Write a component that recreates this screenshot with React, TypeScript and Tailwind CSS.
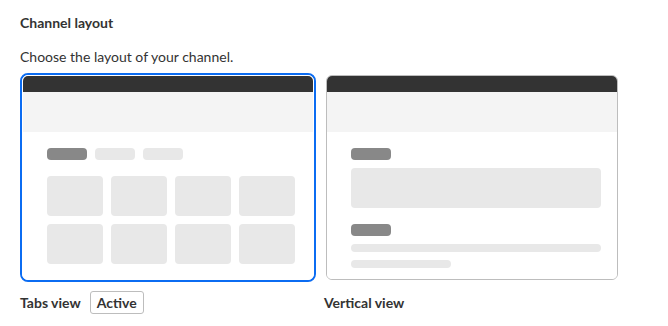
const font = { fontFamily: 'Lato, "Noto Sans", sans-serif' }

function Frame({ children }: { children: React.ReactNode }) {
  return (
    <div className="flex h-full flex-col">
      <div className="h-4 shrink-0 bg-[#333333]" />
      <div className="h-10 shrink-0 bg-[#f4f4f4]" />
      <div className="flex-1 bg-white pt-4 pl-6">
        <div className="w-[250px]">{children}</div>
      </div>
    </div>
  )
}

function TabsPreview() {
  return (
    <Frame>
      <div className="flex gap-2">
        <div className="h-3 w-10 rounded bg-[#888888]" />
        <div className="h-3 w-10 rounded bg-[#e8e8e8]" />
        <div className="h-3 w-10 rounded bg-[#e8e8e8]" />
      </div>
      <div className="mt-4 grid w-[248px] grid-cols-4 gap-2">
        {Array.from({ length: 8 }).map((_, i) => (
          <div key={i} className="h-10 rounded bg-[#e8e8e8]" />
        ))}
      </div>
    </Frame>
  )
}

function VerticalPreview() {
  return (
    <Frame>
      <div className="h-3 w-10 rounded bg-[#888888]" />
      <div className="mt-2 h-10 rounded bg-[#e8e8e8]" />
      <div className="mt-4 h-3 w-10 rounded bg-[#888888]" />
      <div className="mt-2 h-2 rounded-full bg-[#e8e8e8]" />
      <div className="mt-2 h-2 w-[100px] rounded-full bg-[#e8e8e8]" />
    </Frame>
  )
}

export default function App() {
  return (
    <div className="min-h-[326px] bg-white px-5 pt-[13px] text-[#333333]" style={font}>
      <h2 className="text-[14px] leading-5 font-bold">Channel layout</h2>
      <p className="mt-[14px] text-[14px] leading-5">Choose the layout of your channel.</p>

      <div className="mt-[6px] flex gap-2">
        <div className="w-[296px]">
          <div className="h-[209px] rounded-lg border-2 border-[#0b6cf2]">
            <div className="h-full overflow-hidden rounded-md border border-white">
              <TabsPreview />
            </div>
          </div>
          <div className="mt-[9px] flex items-center gap-[9px]">
            <span className="text-[14px] font-bold">Tabs view</span>
            <span className="flex h-[23px] items-center rounded-[3px] border border-[#bdbdbd] px-[6px] text-[14px] font-bold">
              Active
            </span>
          </div>
        </div>

        <div className="w-[296px]">
          <div className="h-[209px] rounded-lg border-2 border-transparent">
            <div className="h-full overflow-hidden rounded-md border border-[#bdbdbd]">
              <VerticalPreview />
            </div>
          </div>
          <div className="mt-[9px] flex h-[23px] items-center">
            <span className="text-[14px] font-bold">Vertical view</span>
          </div>
        </div>
      </div>
    </div>
  )
}
